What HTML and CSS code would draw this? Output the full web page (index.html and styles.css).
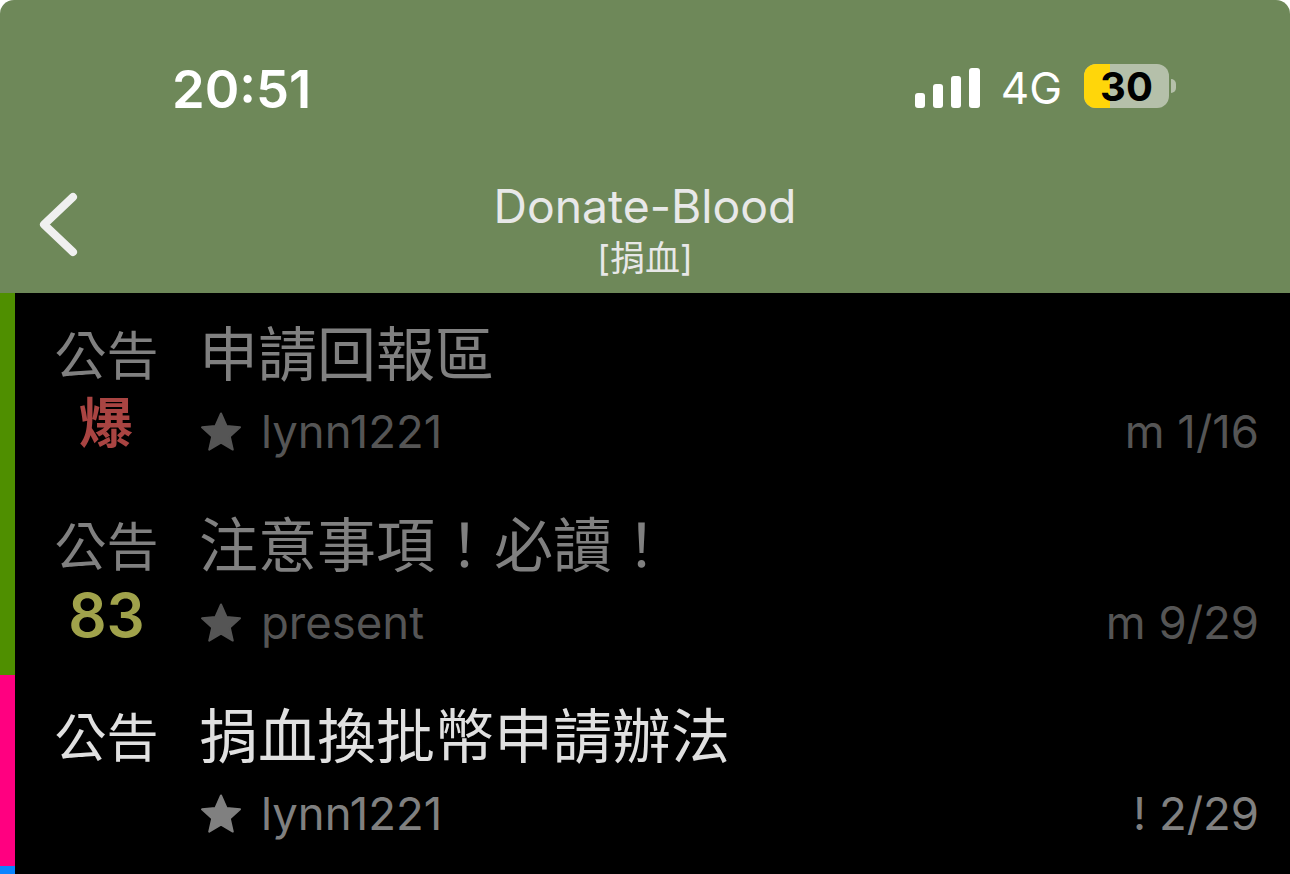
FILE: index.html
```html
<!DOCTYPE html>
<html>
<head>
  <title>Donate-Blood</title>
  <link rel="stylesheet" href="styles.css">
</head>
<body>
  <div class="screen">
    <div class="header">
      <div class="status-bar">
        <div class="time">20:51</div>
        <div class="status-right">
          <div class="signal">
            <span class="bar bar1"></span>
            <span class="bar bar2"></span>
            <span class="bar bar3"></span>
            <span class="bar bar4"></span>
          </div>
          <div class="network">4G</div>
          <div class="battery">
            <div class="battery-body">
              <div class="battery-level"></div>
              <div class="battery-text">30</div>
            </div>
            <div class="battery-cap"></div>
          </div>
        </div>
      </div>
      <div class="nav-bar">
        <svg class="back" width="40" height="66" viewBox="0 0 40 66">
          <path d="M34 6 L5 33.5 L34 61" fill="none" stroke="#f0f0f0" stroke-width="8" stroke-linecap="round" stroke-linejoin="round"/>
        </svg>
        <div class="nav-title">
          <div class="board-name">Donate-Blood</div>
          <div class="board-sub">[捐血]</div>
        </div>
      </div>
    </div>

    <div class="list">
      <div class="row row-read">
        <div class="mark mark-green"></div>
        <div class="side">
          <div class="tag">公告</div>
          <div class="count count-hot">爆</div>
        </div>
        <div class="main">
          <div class="title">申請回報區</div>
          <div class="meta">
            <svg class="star" width="42" height="40" viewBox="0 0 42 40"><path d="M21 1.5 L26.5 14 L40 15.3 L29.8 24.4 L32.8 37.6 L21 30.7 L9.2 37.6 L12.2 24.4 L2 15.3 L15.5 14 Z" fill="currentColor" stroke="currentColor" stroke-width="2" stroke-linejoin="round"/></svg>
            <div class="author">lynn1221</div>
            <div class="date">m 1/16</div>
          </div>
        </div>
      </div>

      <div class="row row-read">
        <div class="mark mark-green"></div>
        <div class="side">
          <div class="tag">公告</div>
          <div class="count count-num">83</div>
        </div>
        <div class="main">
          <div class="title">注意事項！必讀！</div>
          <div class="meta">
            <svg class="star" width="42" height="40" viewBox="0 0 42 40"><path d="M21 1.5 L26.5 14 L40 15.3 L29.8 24.4 L32.8 37.6 L21 30.7 L9.2 37.6 L12.2 24.4 L2 15.3 L15.5 14 Z" fill="currentColor" stroke="currentColor" stroke-width="2" stroke-linejoin="round"/></svg>
            <div class="author">present</div>
            <div class="date">m 9/29</div>
          </div>
        </div>
      </div>

      <div class="row row-new">
        <div class="mark mark-pink"></div>
        <div class="side">
          <div class="tag">公告</div>
        </div>
        <div class="main">
          <div class="title">捐血換批幣申請辦法</div>
          <div class="meta">
            <svg class="star" width="42" height="40" viewBox="0 0 42 40"><path d="M21 1.5 L26.5 14 L40 15.3 L29.8 24.4 L32.8 37.6 L21 30.7 L9.2 37.6 L12.2 24.4 L2 15.3 L15.5 14 Z" fill="currentColor" stroke="currentColor" stroke-width="2" stroke-linejoin="round"/></svg>
            <div class="author">lynn1221</div>
            <div class="date">! 2/29</div>
          </div>
        </div>
      </div>

      <div class="row-next">
        <div class="mark mark-blue"></div>
      </div>
    </div>
  </div>
</body>
</html>
```

FILE: styles.css
```css
html, body {
  margin: 0;
  padding: 0;
  height: 874px;
  overflow: hidden;
  background: #fff;
}

body {
  font-family: Inter, "Noto Sans CJK TC", sans-serif;
}

.screen {
  width: 1290px;
  height: 874px;
  overflow: hidden;
}

.header {
  height: 293px;
  background: #6e8859;
  border-radius: 14px 14px 0 0;
}

.status-bar {
  height: 176px;
  display: flex;
  justify-content: space-between;
  align-items: flex-start;
  padding: 0 114px 0 172px;
}

.time {
  margin-top: 58px;
  font-size: 52.5px;
  line-height: 62px;
  font-weight: 600;
  color: #fff;
}

.status-right {
  display: flex;
  align-items: center;
  margin-top: 64px;
  height: 44px;
}

.signal {
  display: flex;
  align-items: flex-end;
  gap: 8px;
  height: 40px;
  margin-top: 3px;
}

.bar {
  width: 10.25px;
  background: #fff;
  border-radius: 3px;
}

.bar1 { height: 15px; }
.bar2 { height: 24px; }
.bar3 { height: 32px; }
.bar4 { height: 40px; }

.network {
  margin-left: 21px;
  padding-top: 4px;
  font-size: 44px;
  line-height: 48px;
  color: #fff;
}

.battery {
  display: flex;
  align-items: center;
  margin-left: 22px;
}

.battery-body {
  position: relative;
  width: 85px;
  height: 44px;
  border-radius: 12px;
  background: #b5c0aa;
}

.battery-level {
  width: 26px;
  height: 100%;
  background: #ffd60a;
  border-radius: 12px 0 0 12px;
}

.battery-text {
  position: absolute;
  top: 1px;
  left: 0;
  width: 85px;
  text-align: center;
  font-size: 40px;
  line-height: 44px;
  font-weight: 700;
  color: #000;
}

.battery-cap {
  width: 5px;
  height: 14px;
  margin-left: 2px;
  background: #b5c0aa;
  border-radius: 0 5px 5px 0;
}

.nav-bar {
  position: relative;
  height: 117px;
}

.back {
  position: absolute;
  left: 39px;
  top: 15px;
}

.nav-title {
  text-align: center;
  color: #e8e8e8;
}

.board-name {
  padding-top: 3px;
  font-size: 46.3px;
  line-height: 54px;
}

.board-sub {
  padding-top: 5px;
  font-size: 35px;
  line-height: 40px;
}

.list {
  background: #000;
}

.row {
  display: flex;
  height: 191px;
}

.mark {
  width: 15px;
  flex-shrink: 0;
}

.mark-green { background: #4f8f00; }
.mark-pink { background: #ff0080; }
.mark-blue { background: #0a84ff; height: 100%; }

.row-next {
  height: 8px;
}

.side {
  width: 185px;
  flex-shrink: 0;
  text-align: center;
}

.tag {
  width: 183px;
  margin-top: 32px;
  font-size: 52px;
  line-height: 64px;
}

.count {
  width: 183px;
  padding-top: 3px;
  font-size: 54px;
  line-height: 64px;
  font-weight: 700;
}

.count-hot { color: #a94442; width: 182px; }
.count-num { color: #a0a24b; font-size: 60px; font-weight: 600; }

.main {
  flex: 1;
  padding-right: 31px;
}

.title {
  margin-top: 29px;
  margin-left: -1px;
  font-size: 59px;
  line-height: 66px;
}

.meta {
  display: flex;
  align-items: center;
  margin-top: 16px;
  font-size: 45.5px;
  line-height: 56px;
}

.star {
  margin-right: 19px;
}

.date {
  margin-left: auto;
}

.row-read .tag,
.row-read .title {
  color: #808080;
}

.row-read .meta {
  color: #555555;
}

.row-new .tag,
.row-new .title {
  color: #e0e0e0;
}

.row-new .meta {
  color: #808080;
}
```
